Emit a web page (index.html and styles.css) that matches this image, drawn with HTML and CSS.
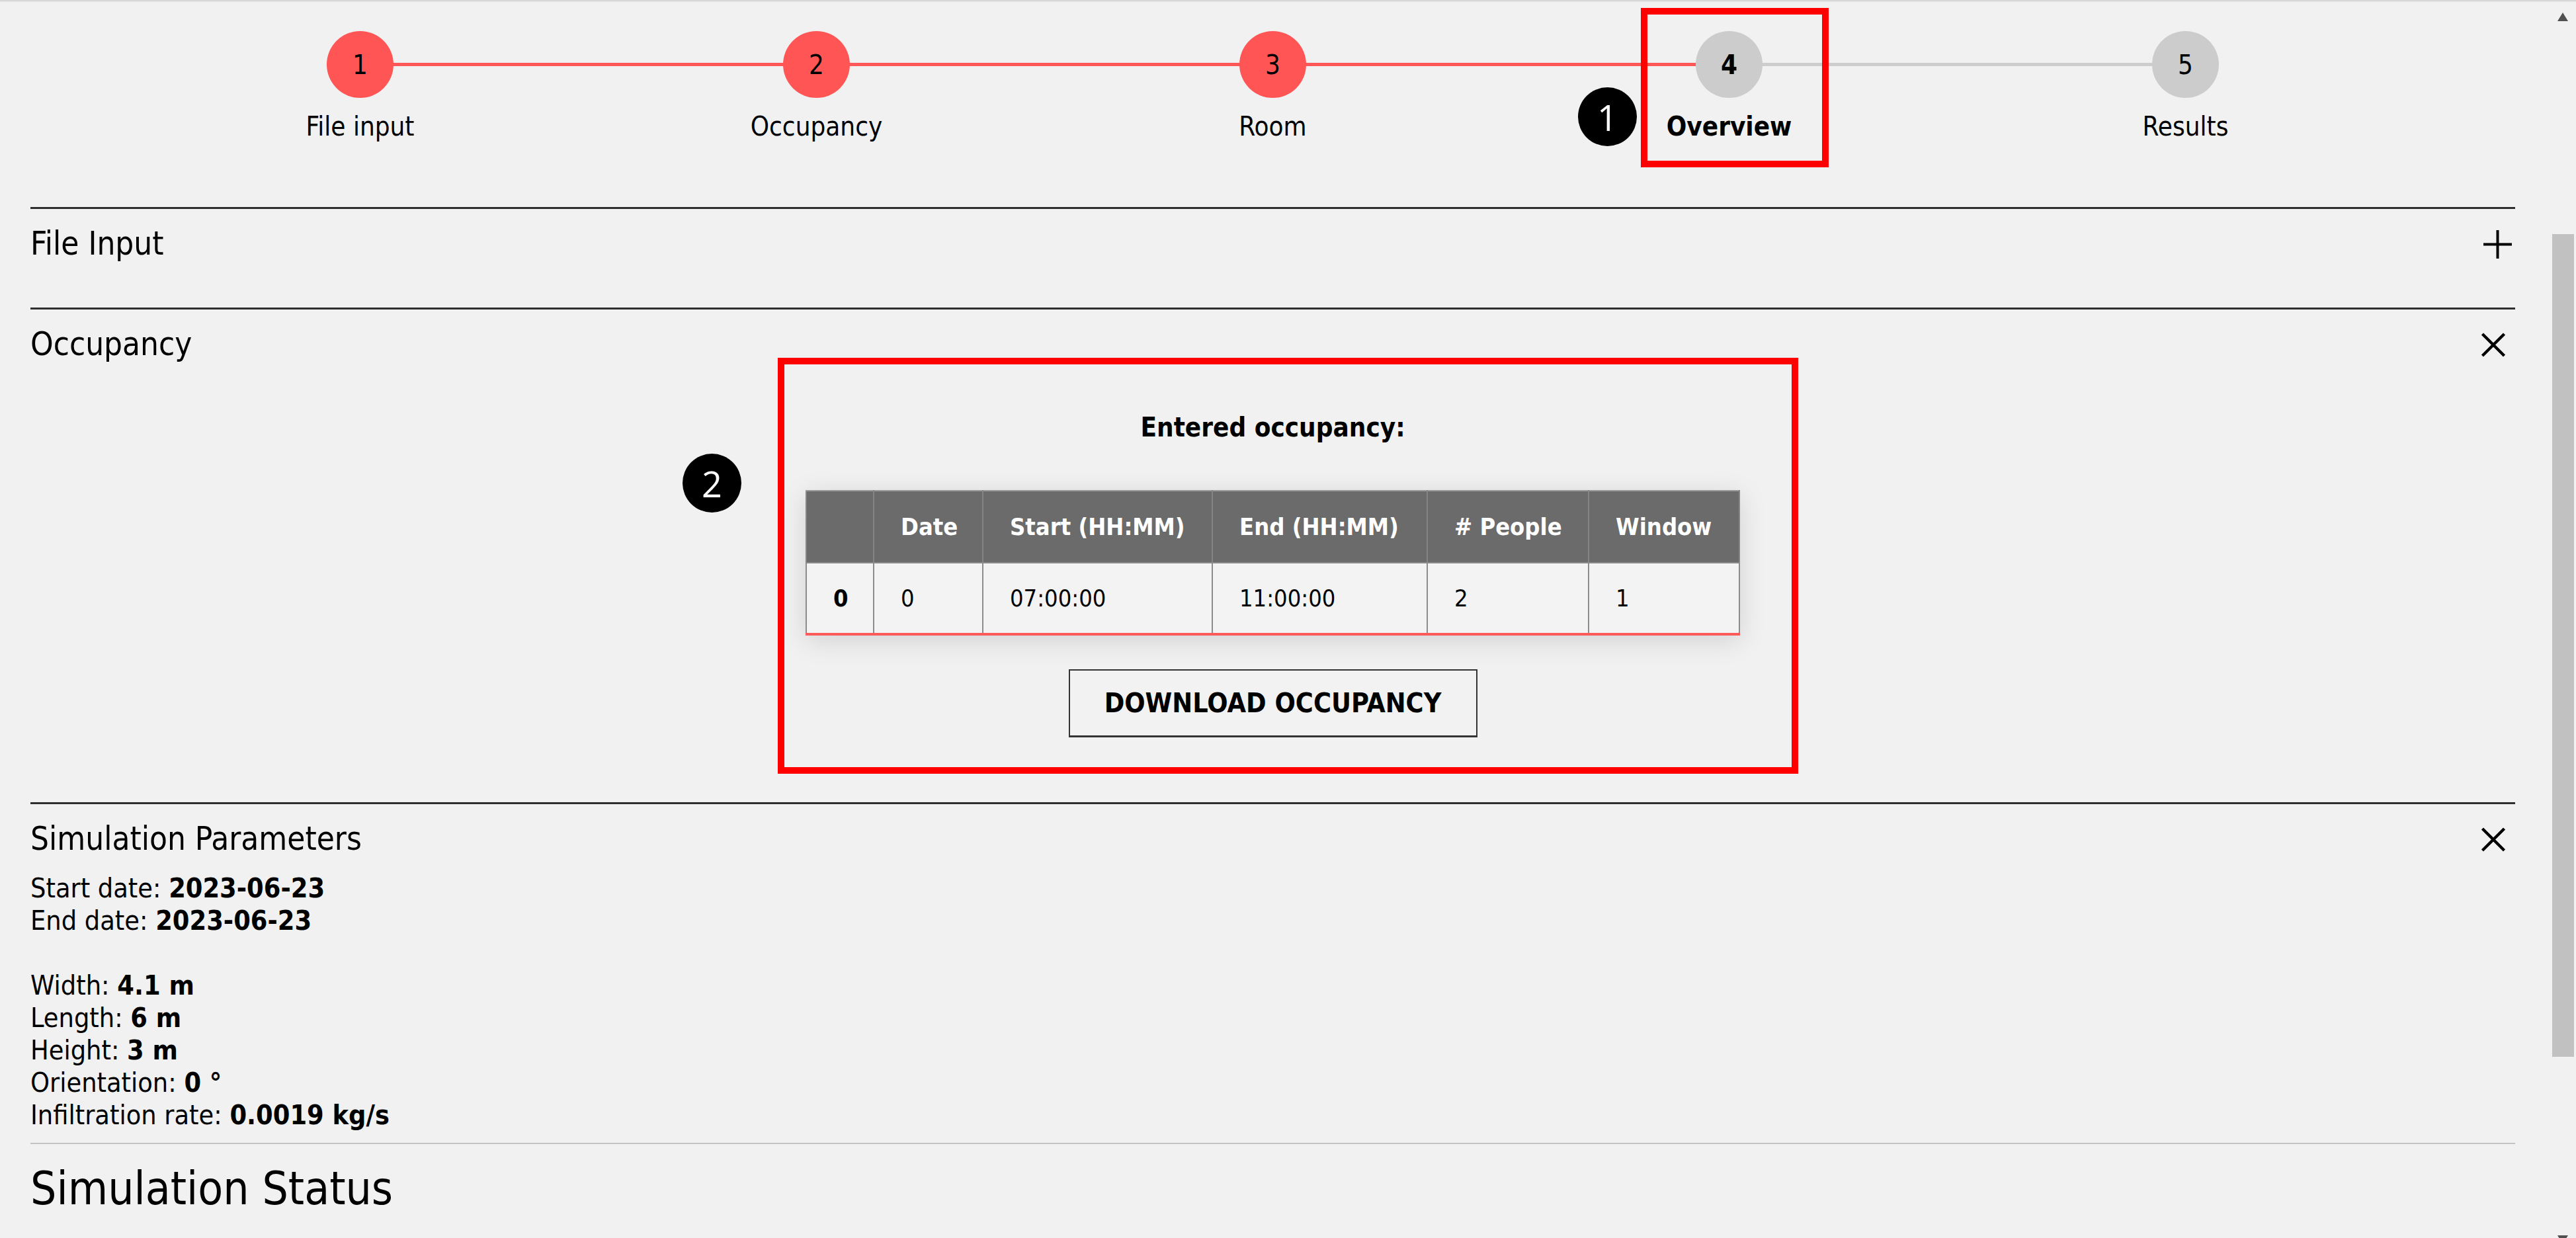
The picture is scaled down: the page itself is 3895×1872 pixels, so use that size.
FILE: index.html
```html
<!DOCTYPE html>
<html lang="en">
<head>
<meta charset="utf-8">
<title>Simulation overview</title>
<link rel="stylesheet" href="styles.css">
</head>
<body>
<div class="topbar"></div>
<div class="shell">
  <main class="page">
    <ol class="stepper">
      <li class="step done"><span class="dot">1</span><span class="label">File input</span></li>
      <li class="step done"><span class="dot">2</span><span class="label">Occupancy</span></li>
      <li class="step done"><span class="dot">3</span><span class="label">Room</span></li>
      <li class="step current"><span class="dot">4</span><span class="label">Overview</span></li>
      <li class="step todo"><span class="dot">5</span><span class="label">Results</span></li>
    </ol>

    <section class="panel panel-file">
      <div class="panel-head">
        <h2 class="panel-title">File Input</h2>
        <svg class="icon-plus" viewBox="0 0 43 43" aria-hidden="true"><path d="M0 21.5H43M21.5 0V43" /></svg>
      </div>
    </section>

    <section class="panel panel-occ">
      <div class="panel-head">
        <h2 class="panel-title">Occupancy</h2>
        <svg class="icon-close" viewBox="0 0 38 38" aria-hidden="true"><path d="M2 2L36 36M36 2L2 36" /></svg>
      </div>
      <div class="occupancy">
        <p class="occ-title">Entered occupancy:</p>
        <table class="occ-table">
          <thead>
            <tr>
              <th class="c-idx"></th>
              <th class="c-date">Date</th>
              <th class="c-start">Start (HH:MM)</th>
              <th class="c-end">End (HH:MM)</th>
              <th class="c-people"># People</th>
              <th class="c-window">Window</th>
            </tr>
          </thead>
          <tbody>
            <tr>
              <td class="idx">0</td>
              <td>0</td>
              <td>07:00:00</td>
              <td>11:00:00</td>
              <td>2</td>
              <td>1</td>
            </tr>
          </tbody>
        </table>
        <button class="btn-download" type="button">DOWNLOAD OCCUPANCY</button>
      </div>
    </section>

    <section class="panel panel-params">
      <div class="panel-head">
        <h2 class="panel-title">Simulation Parameters</h2>
        <svg class="icon-close" viewBox="0 0 38 38" aria-hidden="true"><path d="M2 2L36 36M36 2L2 36" /></svg>
      </div>
      <div class="params">
        <div>Start date: <b>2023-06-23</b></div>
        <div>End date: <b>2023-06-23</b></div>
        <div class="blank">&nbsp;</div>
        <div>Width: <b>4.1 m</b></div>
        <div>Length: <b>6 m</b></div>
        <div>Height: <b>3 m</b></div>
        <div>Orientation: <b>0 °</b></div>
        <div>Infiltration rate: <b>0.0019 kg/s</b></div>
      </div>
    </section>

    <section class="status">
      <h2 class="status-title">Simulation Status</h2>
    </section>
  </main>

  <div class="scrollbar" aria-hidden="true">
    <span class="sb-up"></span>
    <span class="sb-thumb"></span>
    <span class="sb-down"></span>
  </div>
</div>

<div class="note-box note-box-1"></div>
<div class="note-badge note-badge-1">1</div>
<div class="note-box note-box-2"></div>
<div class="note-badge note-badge-2">2</div>
</body>
</html>
```

FILE: styles.css
```css
html, body {
  margin: 0;
  padding: 0;
  height: 100%;
  overflow: hidden;
}

body {
  background: #f1f1f1;
  color: #000;
  font-family: "DejaVu Sans Condensed", "DejaVu Sans", "Liberation Sans", sans-serif;
  font-stretch: condensed;
  font-size: 40px;
  position: relative;
}

.topbar {
  height: 3px;
  background: linear-gradient(#cfcfcf, #e9e9e9);
}

.shell {
  display: flex;
  height: 1869px;
  overflow: hidden;
}

.page {
  flex: 1;
  min-width: 0;
  padding: 0 52px 0 46px;
}

/* ---------- stepper ---------- */
.stepper {
  list-style: none;
  display: flex;
  width: 3450px;
  margin: 44px auto 97.8px;
  padding: 0;
}

.step {
  flex: 1;
  display: flex;
  flex-direction: column;
  align-items: center;
  position: relative;
}

.step::before {
  content: "";
  position: absolute;
  left: 50%;
  width: 100%;
  top: 48px;
  height: 5px;
  background: #ff5757;
}

.step.current::before {
  background: #cdcdcd;
}

.step:last-child::before {
  display: none;
}

.dot {
  position: relative;
  z-index: 1;
  width: 101px;
  height: 101px;
  border-radius: 50%;
  background: #ff5555;
  display: flex;
  align-items: center;
  justify-content: center;
  font-size: 40px;
  line-height: 1;
}

.step.current .dot,
.step.todo .dot {
  background: #cccccc;
}

.step.current .dot,
.step.current .label {
  font-weight: bold;
}

.label {
  margin-top: 19.2px;
  font-size: 40px;
  line-height: 48px;
}

/* ---------- panels ---------- */
.panel {
  border-top: 3px solid #2e2e2e;
  padding-top: 24.5px;
}

.panel-head {
  display: flex;
  align-items: center;
  justify-content: space-between;
  height: 58.8px;
}

.panel-title {
  margin: 0;
  font-size: 49px;
  font-weight: normal;
  line-height: 58.8px;
}

.panel-file {
  padding-bottom: 65.7px;
}

.icon-plus {
  width: 43px;
  height: 43px;
  margin-right: 5px;
  fill: none;
  stroke: #000;
  stroke-width: 4;
}

.icon-close {
  width: 38px;
  height: 37px;
  margin-right: 14px;
  fill: none;
  stroke: #000;
  stroke-width: 4.5;
}

/* ---------- occupancy ---------- */
.occupancy {
  display: flex;
  flex-direction: column;
  align-items: center;
  padding-top: 70.7px;
  padding-bottom: 98px;
}

.occ-title {
  margin: 0;
  font-weight: bold;
  font-size: 40px;
  line-height: 48px;
}

.occ-table {
  margin-top: 71px;
  width: 1411px;
  table-layout: fixed;
  border-collapse: collapse;
  font-size: 36px;
  box-shadow: 0 8px 38px rgba(0, 0, 0, 0.13);
  border-bottom: 4px solid #ff5a5a;
}

.occ-table th {
  box-sizing: border-box;
  height: 109px;
  padding: 0 0 0 40px;
  text-align: left;
  font-weight: bold;
  color: #fff;
  background: #6b6b6b;
  border-top: 2px solid #9a9a9a;
  border-left: 2px solid #858585;
  border-right: 2px solid #858585;
  border-bottom: 2px solid #8a8a8a;
}

.occ-table td {
  height: 105px;
  padding: 0 0 0 40px;
  background: #f3f3f3;
  border-left: 2px solid #8c8c8c;
  border-right: 2px solid #8c8c8c;
}

.occ-table .idx {
  font-weight: bold;
}

.c-idx { width: 102px; }
.c-date { width: 165px; }
.c-start { width: 347px; }
.c-end { width: 325px; }
.c-people { width: 244px; }
.c-window { width: 228px; }

.btn-download {
  margin-top: 51px;
  width: 618px;
  height: 103px;
  padding: 0;
  background: #f2f2f2;
  border: 2px solid #333;
  border-bottom-width: 3px;
  border-radius: 0;
  font-family: inherit;
  font-stretch: inherit;
  font-size: 41px;
  font-weight: bold;
  color: #000;
}

/* ---------- parameters ---------- */
.params {
  margin-top: 19.5px;
  padding-bottom: 17.2px;
  font-size: 41px;
  line-height: 49px;
}

/* ---------- status ---------- */
.status {
  border-top: 2px solid #c3c3c3;
  padding-top: 27px;
}

.status-title {
  margin: 0;
  font-size: 69px;
  font-weight: normal;
  line-height: 81.6px;
}

/* ---------- scrollbar ---------- */
.scrollbar {
  flex: none;
  width: 40px;
  display: flex;
  flex-direction: column;
  align-items: center;
  background: #f1f1f1;
}

.sb-up {
  margin-top: 16px;
  width: 0;
  height: 0;
  border-left: 8.5px solid transparent;
  border-right: 8.5px solid transparent;
  border-bottom: 13px solid #505050;
}

.sb-thumb {
  margin-top: 322px;
  width: 33px;
  height: 1244px;
  background: #c1c1c1;
}

.sb-down {
  margin-top: auto;
  margin-bottom: -9px;
  width: 0;
  height: 0;
  border-left: 8.5px solid transparent;
  border-right: 8.5px solid transparent;
  border-top: 13px solid #505050;
}

/* ---------- annotation overlays ---------- */
.note-box {
  position: absolute;
  box-sizing: border-box;
  border: 10px solid #ff0000;
}

.note-box-1 {
  left: 2481px;
  top: 12px;
  width: 284px;
  height: 241px;
}

.note-box-2 {
  left: 1176px;
  top: 541px;
  width: 1543px;
  height: 629px;
}

.note-badge {
  position: absolute;
  width: 89px;
  height: 89px;
  border-radius: 50%;
  background: #000;
  color: #fff;
  display: flex;
  align-items: center;
  justify-content: center;
  font-family: "Open Sans", "Noto Sans", sans-serif;
  font-stretch: normal;
  font-size: 54px;
  line-height: 1;
}

.note-badge-1 {
  left: 2386px;
  top: 132px;
}

.note-badge-2 {
  left: 1032px;
  top: 686px;
}
```
